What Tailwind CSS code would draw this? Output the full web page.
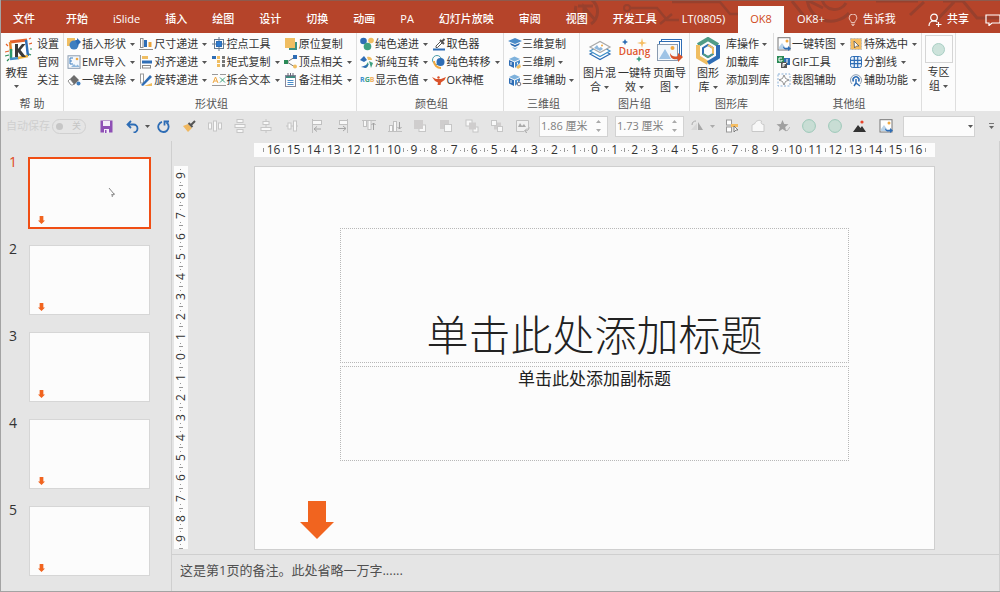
<!DOCTYPE html>
<html lang="zh-CN">
<head>
<meta charset="utf-8">
<title>OK8</title>
<script src="https://cdn.jsdelivr.net/npm/@tailwindcss/browser@4"></script>
</head>
<body class="h-screen overflow-hidden bg-[#e5e5e5] font-['Open_Sans','Noto_Sans_CJK_SC',sans-serif] text-[11px] text-[#333]">
<svg class="hidden">
  <symbol id="caret" viewBox="0 0 5 3"><path d="M0 0h5L2.500 3z" fill="#555"/></symbol>
  <symbol id="down" viewBox="0 0 34 38"><path d="M8 0h18v21h8L17 38 0 21h8z" fill="#f1641f"/></symbol>
  <symbol id="pic" viewBox="0 0 14 14"><rect x="1" y=".7" width="12" height="12.3" fill="#fff" stroke="#777"/><circle cx="10" cy="4" r="1.500" fill="#f0a840"/><path d="M2 10l3-4 3 4v2H2z" fill="#b9d3ea"/><path d="M6 9c1 2 3 2 5 1.500l0-1.500 3 2.500-3 2.500v-1.500c-3 .5-5-.5-5-3.500z" fill="#2e6db5"/></symbol>
  <symbol id="cube" viewBox="0 0 14 14"><path d="M1 4l5.500-2.500L12 4 6.500 6.500z" fill="#7fb2dc"/><path d="M1 5l5 2.300V13L1 10.500z" fill="#2e6db5"/><path d="M7 7.300L12 5v3L7 13z" fill="#4a8bc8"/><path d="M3 7v3M9.500 7.500v2" stroke="#fff"/></symbol>
</svg>
<div class="flex h-full flex-col border-b border-l border-[#a3a3a3]">
  <header class="relative flex h-[33px] shrink-0 items-end border-t border-[#8d5a4d] bg-[#b5442a] text-white">
    <svg class="absolute top-0 right-0 h-8 w-[440px]" viewBox="0 0 440 32" fill="none" stroke="#98402d" stroke-width="3"><path d="M16 5a15 15 0 0 0 9 18M32-1a15 15 0 0 1-1 24M18 5h15M24 15V6l11 13"/><circle cx="67" cy="7" r="3" stroke-width="2"/><path d="M70 7h27l10 12h12M100 23l12-10M112 1h48l10 12h20" stroke-width="2.500"/><path d="M232 0l12 15M262-2a13 13 0 0 0 24 4M247-3a24 24 0 0 0 42 15M249 0l14 7M350 14l14-13M374 22l20-21M383 0h20l14 17h24M316 0h42"/></svg>
    <nav class="relative flex h-[27px] gap-px whitespace-nowrap [&>button]:px-3 [&>button]:font-medium">
      <button class="mr-[6px]">文件</button><button>开始</button><button>iSlide</button><button>插入</button><button>绘图</button><button>设计</button><button>切换</button><button>动画</button><button>PA</button><button>幻灯片放映</button><button>审阅</button><button>视图</button><button>开发工具</button><button>LT(0805)</button><button class="bg-[#fcfcfc] text-[#d04a20]">OK8</button><button>OK8+</button>
      <button class="flex items-center gap-1"><svg class="-ml-[3px] size-3" viewBox="0 0 12 14" fill="none" stroke="#f5dcd5"><path d="M4 10c0-2-2.500-3-2.500-5.500a4.500 4.500 0 0 1 9 0C10.500 7 8 8 8 10zM4 12h4M5 13.500h2"/></svg><span class="font-normal">告诉我</span></button>
    </nav>
    <button class="relative ml-auto flex h-[27px] items-center gap-[5px] font-medium"><svg class="size-[14px]" viewBox="0 0 14 14" fill="none" stroke="#fff" stroke-width="1.200"><circle cx="6" cy="4.500" r="3.300"/><path d="M1 13c0-3 2-5 5-5 1.500 0 2.500.4 3.300 1.200M10.500 9v5M8 11.500h5.500"/></svg>共享</button>
    <button class="relative ml-4 h-[27px] w-[15px] overflow-hidden" aria-label="批注"><svg class="h-3 w-4" viewBox="0 0 16 12" fill="none" stroke="#fff" stroke-width="1.200"><path d="M1 1h14v8H7l-3 2.500V9H1z"/></svg></button>
  </header>

  <section class="flex h-[78px] shrink-0 bg-[#fcfcfc] whitespace-nowrap [&_.caret]:ml-[3px]">
    <div class="flex w-[63px] flex-col border-r border-[#dedede] pt-[2px]">
      <div class="flex h-[62px]">
        <button class="flex w-[31px] flex-col items-center"><svg class="mt-px ml-1 size-[27px]" viewBox="0 0 27 27" fill="none"><path d="M5 6l17-2" stroke="#e5622e" stroke-width="3"/><path d="M5 6l1 9" stroke="#e98a2e" stroke-width="2.500"/><path d="M6 13v10" stroke="#2b9a6a" stroke-width="2.500"/><path d="M21 4l2 16" stroke="#2e6db5" stroke-width="2.500"/><path d="M5 23l9-1" stroke="#3f8fc8" stroke-width="2.500"/><path d="M13 22l10-2" stroke="#f0b23a" stroke-width="2.500"/><path d="M8 8l12-1 1 12-13 2z" fill="#fff"/><path d="M10 8h3v5l4-5h3.500l-5 6 5.500 7h-4l-4-5v5h-3z" fill="#3a3a3a"/><path d="M0 16l4-1M24 8l3-1M1 8l2 2M24 3l2-1" stroke="#e5622e" stroke-width="1.200"/><path d="M0 20l4-1M25 13l2 0M2 25l2-2M24 18l2 1" stroke="#2b8a57" stroke-width="1.200"/></svg><span class="mt-[3px] leading-[14px]">教程</span><svg class="mt-[5px] h-[3px] w-[5px]"><use href="#caret"/></svg></button>
        <div class="ml-[5px] flex flex-col [&>button]:h-[18px]"><button>设置</button><button>官网</button><button>关注</button></div>
      </div>
      <h2 class="text-center leading-[14px] text-[#555]">帮 助</h2>
    </div>

    <div class="flex w-[293px] flex-col border-r border-[#dedede] pt-[2px] pl-[3px]">
      <div class="flex h-[62px] [&_button]:flex [&_button]:h-[18px] [&_button]:items-center [&_button]:gap-px [&>div]:w-[73px]">
        <div>
          <button><svg class="size-[14px]" viewBox="0 0 14 14"><rect x="0" y="1" width="8" height="8" fill="#f0be62"/><circle cx="7" cy="8" r="4.500" fill="#3f7fc0"/><path d="M8 3h2V1l4 4-4 4V7z" fill="#2e6db5"/></svg>插入形状<svg class="caret h-[3px] w-[5px]"><use href="#caret"/></svg></button>
          <button><svg class="size-[14px]" viewBox="0 0 14 14"><rect x="1" y=".8" width="12" height="12.500" fill="#f4f8fc" stroke="#8a9bb0"/><path d="M6 3H3v3h2M3 6v3h3" stroke="#3f7fc0" fill="none"/><circle cx="10" cy="4" r="1.300" fill="#f0a840"/><path d="M4 12l3-3 2 2 1.500-1.500L13 12z" fill="#8fb8dd"/></svg>EMF导入<svg class="caret h-[3px] w-[5px]"><use href="#caret"/></svg></button>
          <button><svg class="size-[14px]" viewBox="0 0 14 14"><path d="M1 8l6-6 5 5-5 5H4z" fill="#6d6d6d"/><path d="M1 8l2-2 4 5-1 1H4z" fill="#fff" stroke="#777" stroke-width=".7"/><circle cx="11.500" cy="10.500" r="2" fill="#3f7fc0"/></svg>一键去除<svg class="caret h-[3px] w-[5px]"><use href="#caret"/></svg></button>
        </div>
        <div>
          <button><svg class="size-[14px]" viewBox="0 0 14 14"><rect x="1.500" y="1.500" width="2.500" height="9" fill="#fff" stroke="#888"/><rect x="5" y="3" width="3" height="7" fill="#2e6db5"/><rect x="9.500" y="5" width="3" height="5" fill="#e9a33a"/><path d="M0 12.500h14" stroke="#888"/></svg>尺寸递进<svg class="caret h-[3px] w-[5px]"><use href="#caret"/></svg></button>
          <button><svg class="size-[14px]" viewBox="0 0 14 14"><path d="M1.500 0v14" stroke="#999"/><rect x="3" y="1" width="6" height="3" fill="#f0be62"/><rect x="3" y="5.500" width="10" height="3" fill="#2e6db5"/><rect x="3.500" y="10.500" width="8" height="2.500" fill="#fff" stroke="#888"/></svg>对齐递进<svg class="caret h-[3px] w-[5px]"><use href="#caret"/></svg></button>
          <button><svg class="size-[14px]" viewBox="0 0 14 14"><rect x="1.500" y="1" width="3" height="9" fill="#fff" stroke="#999"/><path d="M2 12L11 2l2 2-9 9z" fill="#2e6db5"/><path d="M5 13l8-3v3z" fill="#f0be62"/></svg>旋转递进<svg class="caret h-[3px] w-[5px]"><use href="#caret"/></svg></button>
        </div>
        <div>
          <button><svg class="size-[14px]" viewBox="0 0 14 14" fill="none" stroke="#667a90"><rect x="2.500" y="2.500" width="9" height="9"/><path d="M7 0v14M0 7h14"/><rect x="4.500" y="4.500" width="5" height="5" fill="#2e7bd0" stroke="#2e6db5"/></svg>控点工具</button>
          <button><svg class="size-[14px]" viewBox="0 0 14 14"><path d="M0 1h4v3H0z" fill="#2e6db5"/><path d="M6.500 1v12" stroke="#f0be62" stroke-width="3" stroke-dasharray="3 1"/><path d="M11.500 1v12" stroke="#777" stroke-width="3" stroke-dasharray="3 1"/></svg>矩式复制<svg class="caret h-[3px] w-[5px]"><use href="#caret"/></svg></button>
          <button><svg class="size-[14px]" viewBox="0 0 14 14" fill="none"><path d="M0 1.500h6M8 1.500h6M0 12.500h14" stroke="#999"/><path d="M1 10l2.500-6L6 10M2 8h3" stroke="#f0a840"/><path d="M8 4.500l5 5M13 4.500l-5 5" stroke="#3ba07c"/></svg>拆合文本<svg class="caret h-[3px] w-[5px]"><use href="#caret"/></svg></button>
        </div>
        <div>
          <button><svg class="size-[14px]" viewBox="0 0 14 14"><rect x="5" y="5" width="8" height="8" fill="#3a8f80"/><rect x="1" y="1" width="10" height="10" fill="#f0be62"/></svg>原位复制</button>
          <button><svg class="size-[14px]" viewBox="0 0 14 14"><path d="M11 2L3 7l8 5" fill="none" stroke="#777"/><path d="M0 5h4v4H0z" fill="#2b8a57"/><path d="M9 0h4v4H9z" fill="#2e6db5"/><circle cx="11" cy="11.500" r="2" fill="#f0be62"/></svg>顶点相关<svg class="caret h-[3px] w-[5px]"><use href="#caret"/></svg></button>
          <button><svg class="size-[14px]" viewBox="0 0 14 14"><rect x="1.500" y="2.500" width="10" height="11" fill="#fff" stroke="#889"/><path d="M2 4h9" stroke="#3a8f80" stroke-width="2"/><path d="M4 0v4M6.500 0v4M9 0v4" stroke="#667"/><path d="M3.500 7.500h6M3.500 9.500h6M3.500 11.500h6" stroke="#4a8bc8"/></svg>备注相关<svg class="caret h-[3px] w-[5px]"><use href="#caret"/></svg></button>
        </div>
      </div>
      <h2 class="text-center leading-[14px] text-[#555]">形状组</h2>
    </div>

    <div class="flex w-[147px] flex-col border-r border-[#dedede] pt-[2px] pl-[3px]">
      <div class="flex h-[62px] [&_button]:flex [&_button]:h-[18px] [&_button]:items-center [&_button]:gap-px [&>div]:w-[72px]">
        <div>
          <button><svg class="size-[14px]" viewBox="0 0 14 14"><circle cx="3.500" cy="4" r="3.300" fill="#2e6db5"/><circle cx="11" cy="3.500" r="2.800" fill="#f0be62"/><circle cx="7.500" cy="9.500" r="3.800" fill="#3fa080"/></svg>纯色递进<svg class="caret h-[3px] w-[5px]"><use href="#caret"/></svg></button>
          <button><svg class="size-[14px]" viewBox="0 0 14 14"><path d="M0 5l4-4 3 4-3 2z" fill="#2e6db5"/><path d="M7 2c3-1 5 1 5 3l-4 0z" fill="#f0be62"/><path d="M4 13c4 0 5-3 4-6M9 6l4 2-2 5z" fill="#3fa080"/><path d="M1 12l5 1 3-4z" fill="#2e6db5"/></svg>渐纯互转<svg class="caret h-[3px] w-[5px]"><use href="#caret"/></svg></button>
          <button><span class="w-[14px] text-[7px] font-bold text-[#3b8dd0]">R<span class="text-[#3fa080]">G</span><span class="text-[#f0b263]">B</span></span>显示色值<svg class="caret h-[3px] w-[5px]"><use href="#caret"/></svg></button>
        </div>
        <div>
          <button><svg class="size-[14px]" viewBox="0 0 14 14"><path d="M4 9l5-5 1.500 1.500-5 5H4z" fill="#fff" stroke="#555"/><path d="M8 3l4 4M10 4.500L12.500 2" stroke="#555" stroke-width="2"/><path d="M1 12.500h12" stroke="#2e6db5" stroke-width="2"/></svg>取色器</button>
          <button><svg class="size-[14px]" viewBox="0 0 14 14"><circle cx="5" cy="5" r="4.500" fill="none" stroke="#4a9aa8"/><path d="M2 6c0 4 3 7 7 7" fill="none" stroke="#f0a840" stroke-width="2"/><circle cx="8.500" cy="7" r="4" fill="#2e6db5"/></svg>纯色转移<svg class="caret h-[3px] w-[5px]"><use href="#caret"/></svg></button>
          <button><svg class="size-[14px]" viewBox="0 0 14 14"><path d="M0 4l4 2h5l5-2-1.500 3L9 9.500 8.500 12h-3L6 9.500 3 8z" fill="#d9532b"/><circle cx="6.500" cy="4.500" r="1.200" fill="#d9532b"/></svg>OK神框</button>
        </div>
      </div>
      <h2 class="text-center leading-[14px] text-[#555]">颜色组</h2>
    </div>

    <div class="flex w-[76px] flex-col border-r border-[#dedede] pt-[2px] pl-1">
      <div class="h-[62px] [&_button]:flex [&_button]:h-[18px] [&_button]:items-center">
        <button><svg class="size-[14px]" viewBox="0 0 14 14"><path d="M0 4l7-3 7 3-7 3z" fill="#4a8bc8"/><path d="M2 6l5 2 5-2-1 2-4 2-4-2z" fill="#2e6db5"/><path d="M4 10l3 3 3-3-3 1z" fill="#7fb2dc"/></svg>三维复制</button>
        <button><svg class="size-[14px]" viewBox="0 0 14 14"><use href="#cube"/><path d="M8 12l4-3 1 3-3 2z" fill="#f0be62"/></svg>三维刷<svg class="caret h-[3px] w-[5px]"><use href="#caret"/></svg></button>
        <button><svg class="size-[14px]" viewBox="0 0 14 14"><use href="#cube"/><circle cx="11" cy="11" r="1.800" fill="#fff" stroke="#778"/></svg>三维辅助<svg class="caret h-[3px] w-[5px]"><use href="#caret"/></svg></button>
      </div>
      <h2 class="text-center leading-[14px] text-[#555]">三维组</h2>
    </div>

    <div class="flex w-[110px] flex-col border-r border-[#dedede] pt-[2px]">
      <div class="flex h-[62px] justify-center gap-[2px] leading-[14px] [&_button]:flex [&_button]:w-[33px] [&_button]:flex-col [&_button]:items-center">
        <button><svg class="mt-[2px] mb-px h-7 w-6" viewBox="0 0 24 28"><g fill="#fff" stroke-width="1.200"><path d="M2 17l10 5.500L22 17l-10-5.500z" stroke="#2e6db5"/><path d="M2 14l10 5.500L22 14 12 8.500z" stroke="#3f8fc8"/><path d="M2 10l10 5.500L22 10 12 4.500z" stroke="#aaa"/></g><path d="M6 11l3-3 2 3 2-1 2 2-3 2z" fill="#8fb8dd"/><circle cx="14" cy="8.500" r="1" fill="#f0a840"/></svg><span>图片混</span><span class="flex items-center">合<svg class="caret h-[3px] w-[5px]"><use href="#caret"/></svg></span></button>
        <button><span class="relative mt-[2px] mb-px flex h-7 w-[30px] items-center justify-center text-[10px] font-semibold text-[#e0562c]"><svg class="absolute inset-0 size-full" viewBox="0 0 30 28"><path d="M22 1l1 4 4 1-4 1-1 4-1-4-4-1 4-1z" fill="#f5bd62"/><path d="M5 2l1 2 2 1-2 1-1 2-1-2-2-1 2-1z" fill="#2e6db5"/><path d="M19 19l1 2 2 1-2 1-1 2-1-2-2-1 2-1z" fill="#3fa080"/></svg><span class="relative">Duang</span></span><span>一键特</span><span class="flex items-center">效<svg class="caret h-[3px] w-[5px]"><use href="#caret"/></svg></span></button>
        <button><svg class="mt-[2px] mb-px h-7 w-[27px]" viewBox="0 0 27 28"><rect x="5.500" y="2.500" width="20" height="18" fill="#fff" stroke="#2e6db5"/><rect x="3.500" y="4.500" width="20" height="18" fill="#fff" stroke="#2e6db5"/><rect x="1.500" y="7.500" width="20" height="16" fill="#f4f8fc" stroke="#8a9bb0"/><path d="M3 22l6-10 6 10z" fill="#9dc3e6"/><circle cx="16.500" cy="11" r="2" fill="#f0a840"/><path d="M14 16c2 4 5 4 8 3v-3l5 4-5 5v-3c-4 1-8 0-8-6z" fill="#d9532b"/></svg><span>页面导</span><span class="flex items-center">图<svg class="caret h-[3px] w-[5px]"><use href="#caret"/></svg></span></button>
      </div>
      <h2 class="text-center leading-[14px] text-[#555]">图片组</h2>
    </div>

    <div class="flex w-[84px] flex-col border-r border-[#dedede] pt-[2px]">
      <div class="flex h-[62px]">
        <button class="ml-1 flex w-7 flex-col items-center leading-[14px]"><svg class="mt-[2px] mb-px h-7 w-[26px]" viewBox="0 0 26 28" fill="none" stroke-width="4"><path d="M3 8l10-6 10 6" stroke="#4f9c86"/><path d="M3 8v12l10 6" stroke="#f0be62"/><path d="M23 8v12l-10 6" stroke="#2e6db5"/><path d="M8 11l5-3 5 3v6l-5 3-5-3z" stroke="#2e6db5" stroke-width="2"/><path d="M13 8l5 3v6" stroke="#f0be62" stroke-width="2"/><path d="M18 17l-5 3-5-3" stroke="#4f9c86" stroke-width="2"/></svg><span>图形</span><span class="flex items-center">库<svg class="caret h-[3px] w-[5px]"><use href="#caret"/></svg></span></button>
        <div class="ml-1 [&>button]:flex [&>button]:h-[18px] [&>button]:items-center"><button>库操作<svg class="caret h-[3px] w-[5px]"><use href="#caret"/></svg></button><button>加载库</button><button>添加到库</button></div>
      </div>
      <h2 class="text-center leading-[14px] text-[#555]">图形库</h2>
    </div>

    <div class="flex w-[148px] flex-col border-r border-[#dedede] pt-[2px] pl-[3px]">
      <div class="flex h-[62px] [&_button]:flex [&_button]:h-[18px] [&_button]:items-center [&_button]:gap-px [&>div]:w-[73px]">
        <div>
          <button><svg class="size-[14px]"><use href="#pic"/></svg>一键转图<svg class="caret h-[3px] w-[5px]"><use href="#caret"/></svg></button>
          <button><svg class="size-[14px]" viewBox="0 0 14 14"><rect x="0" y="1" width="7" height="7" fill="#2b8a57"/><rect x="7" y="3" width="6" height="7" fill="#2e6db5"/><rect x="4" y="7" width="6" height="6" fill="#555"/><path d="M5 3H2v3h3V5M10 4v4M6 12V8.500h3M6 10h2" fill="none" stroke="#fff"/></svg>GIF工具</button>
          <button><svg class="size-[14px]" viewBox="0 0 14 14"><rect x="1" y="1" width="12" height="12" fill="none" stroke="#8ab0d8" stroke-dasharray="2 1.500"/><path d="M7 2l1.500 3.500L12 7 8.500 8.500 7 12 5.500 8.500 2 7l3.500-1.500z" fill="#fff" stroke="#777" stroke-width=".8"/></svg>裁图辅助</button>
        </div>
        <div>
          <button><svg class="size-[14px]" viewBox="0 0 14 14"><rect x="1.500" y="1.500" width="11" height="11" fill="#f5bd62" stroke="#bbb" stroke-dasharray="2 1"/><path d="M5 4l5 5H7.500L5.500 11z" fill="#fff" stroke="#555" stroke-width=".8"/></svg>特殊选中<svg class="caret h-[3px] w-[5px]"><use href="#caret"/></svg></button>
          <button><svg class="size-[14px]" viewBox="0 0 14 14" fill="none"><rect x="1.500" y="1.500" width="11" height="11" rx="2" fill="#e8f1fa" stroke="#2e6db5"/><path d="M1 5.300h12M1 8.700h12M5.300 1v12M8.700 1v12" stroke="#2e6db5" stroke-width="1.200"/></svg>分割线<svg class="caret h-[3px] w-[5px]"><use href="#caret"/></svg></button>
          <button><svg class="size-[14px]" viewBox="0 0 14 14" fill="none"><path d="M3 11a5.500 5.500 0 1 1 8 0" stroke="#8a9bb0"/><path d="M4.500 8.500a3 3 0 1 1 5 0" stroke="#2e6db5" stroke-width="1.500"/><path d="M7 6v4l-2 3M7 10l4 3" stroke="#2e6db5" stroke-width="1.500"/></svg>辅助功能<svg class="caret h-[3px] w-[5px]"><use href="#caret"/></svg></button>
        </div>
      </div>
      <h2 class="text-center leading-[14px] text-[#555]">其他组</h2>
    </div>

    <div class="w-[34px] border-r border-[#dedede] pt-[2px]">
      <button class="flex w-full flex-col items-center leading-[14px]"><span class="mb-[2px] flex size-7 items-center justify-center border border-[#d5d5d5]"><span class="size-[13px] rounded-full border border-[#a9cfc4] bg-[#cde3db]"></span></span><span>专区</span><span class="flex items-center">组<svg class="caret h-[3px] w-[5px]"><use href="#caret"/></svg></span></button>
    </div>
  </section>

  <section class="flex h-[30px] shrink-0 items-center pl-[5px] [&_svg]:shrink-0">
    <label for="auto" class="text-[#cfcfcf]">自动保存</label>
    <span class="relative ml-[2px] flex h-[15px] w-[34px] items-center"><input id="auto" type="checkbox" role="switch" class="absolute inset-0 size-full appearance-none rounded-full border border-[#d0d0d0]"><span class="pointer-events-none ml-1 size-[7px] rounded-full bg-[#c6c6c6]"></span><span class="pointer-events-none ml-[9px] text-[9px] text-[#c6c6c6]">关</span></span>
    <button class="ml-[14px]" aria-label="保存"><svg class="size-[13px]" viewBox="0 0 13 13"><path d="M.5.500h12v12H.5z" fill="#8e4fb5"/><path d="M3 1h7v5H3zM4 9h5v4H4z" fill="#f3ecf8"/><path d="M5 10h1.500v3H5z" fill="#8e4fb5"/></svg></button>
    <button class="ml-[13px] flex items-center gap-[6px]" aria-label="撤消"><svg class="h-[13px] w-[13px]" viewBox="0 0 13 13" fill="none" stroke="#2e6db5" stroke-width="1.800"><path d="M5 1L1.500 4.500 5 8M2 4.500h5.500a4 4 0 0 1 0 8"/></svg><svg class="h-[3px] w-[5px]"><use href="#caret"/></svg></button>
    <button class="ml-[7px]" aria-label="恢复"><svg class="size-[13px]" viewBox="0 0 13 13" fill="none" stroke="#2e6db5" stroke-width="1.800"><path d="M5 1.800a5.200 5.200 0 1 0 4.500.8M7.500 5.500V1.500h4.500"/></svg></button>
    <div class="ml-3 flex w-[348px] justify-between [&_svg]:size-[14px]">
      <button aria-label="格式刷"><svg viewBox="0 0 14 14"><path d="M1 7l5-2 4 4-4 4z" fill="#f0b860"/><path d="M6.500 4l4 4M9 6l4-4" stroke="#555" stroke-width="2"/></svg></button>
      <button aria-label="横向分布"><svg viewBox="0 0 14 14" fill="#f8f8f8" stroke="#c6c6c6"><rect x=".5" y="4" width="3" height="6"/><rect x="5.500" y="2" width="3" height="10"/><rect x="10.500" y="4" width="3" height="6"/></svg></button>
      <button aria-label="纵向分布"><svg viewBox="0 0 14 14" fill="#f8f8f8" stroke="#c6c6c6"><rect x="4" y=".5" width="6" height="3"/><rect x="2" y="5.500" width="10" height="3"/><rect x="4" y="10.500" width="6" height="3"/></svg></button>
      <button aria-label="水平居中"><svg viewBox="0 0 14 14" fill="#f8f8f8" stroke="#c6c6c6"><path d="M7 0v14"/><rect x="4" y="2.500" width="6" height="3"/><rect x="2" y="8.500" width="10" height="3"/></svg></button>
      <button aria-label="垂直居中"><svg viewBox="0 0 14 14" fill="#f8f8f8" stroke="#c6c6c6"><path d="M1 7h12"/><rect x="3" y="4" width="3" height="6"/><rect x="8.500" y="2" width="3" height="10"/></svg></button>
      <button aria-label="左对齐"><svg viewBox="0 0 14 14" fill="#f8f8f8" stroke="#c0c0c0"><path d="M2.500 0v14"/><rect x="2.500" y="1.500" width="9" height="4"/><path d="M4 10h7M7 7.500L4 10l3 2.500" stroke="#a5a5a5" fill="none"/></svg></button>
      <button aria-label="右对齐"><svg viewBox="0 0 14 14" fill="#f8f8f8" stroke="#c0c0c0"><path d="M11.500 0v14"/><rect x="3.500" y="1.500" width="8" height="4"/><path d="M2 9.500h8M7 7l3 2.500L7 12" stroke="#a5a5a5" fill="none"/></svg></button>
      <button aria-label="顶端对齐"><svg viewBox="0 0 14 14" fill="#f8f8f8" stroke="#c0c0c0"><path d="M0 1.500h14"/><rect x="1.500" y="1.500" width="3" height="6"/><rect x="6" y="1.500" width="3" height="9"/><path d="M11.500 11V4M9.500 6l2-2 2 2" stroke="#a0a0a0" fill="none"/></svg></button>
      <button aria-label="底端对齐"><svg viewBox="0 0 14 14" fill="#f8f8f8" stroke="#c0c0c0"><path d="M0 12.500h14"/><rect x="1.500" y="6.500" width="3" height="6"/><rect x="5.500" y="2.500" width="3" height="10"/><path d="M11.500 3v7M9.500 8l2 2 2-2" stroke="#a0a0a0" fill="none"/></svg></button>
      <button aria-label="置于顶层"><svg viewBox="0 0 14 14"><rect x="6" y="6" width="6.500" height="6.500" fill="#f8f8f8" stroke="#c6c6c6"/><rect x="1" y="1" width="9" height="9" fill="#cfcdcd"/></svg></button>
      <button aria-label="置于底层"><svg viewBox="0 0 14 14"><rect x="1" y="1" width="9" height="9" fill="#cfcdcd"/><rect x="5.500" y="5.500" width="7" height="7" fill="#f8f8f8" stroke="#c6c6c6"/></svg></button>
      <button aria-label="上移一层"><svg viewBox="0 0 14 14" fill="#f8f8f8" stroke="#c6c6c6"><rect x="1" y="1" width="6" height="6"/><rect x="8" y="8" width="5" height="5"/><rect x="4" y="3.500" width="7" height="7" fill="#cfcdcd" stroke="none"/></svg></button>
      <button aria-label="下移一层"><svg viewBox="0 0 14 14" fill="#f8f8f8" stroke="#c6c6c6"><rect x="4" y="3.500" width="7" height="7" fill="#cfcdcd" stroke="none"/><rect x="1.500" y="1.500" width="5" height="5"/><rect x="7.500" y="7.500" width="5" height="5"/></svg></button>
      <button aria-label="更改图片"><svg viewBox="0 0 14 14" fill="none" stroke="#c0c0c0"><path d="M8 12.500H.5v-11h12V8" fill="#f0f0f0"/><path d="M2 8l2-4 2 3 2-2 2 3z" fill="#aaa" stroke="none"/><path d="M13 8c0 3-2 4-4 4M11 9.500L8.500 12l2.500 2" stroke="#aaa"/></svg></button>
    </div>
    <div class="ml-[9px] flex h-[21px] w-[69px] items-center border border-[#d2d2d2] bg-[#fcfcfc]"><input aria-label="高度" value="1.86 厘米" class="w-[56px] pl-px text-[11px] text-[#808080]"><button aria-label="调整高度"><svg class="h-3 w-[5px]" viewBox="0 0 5 12" fill="#aaa"><path d="M0 3l2.500-3L5 3zM0 9l2.500 3L5 9z"/></svg></button></div>
    <div class="ml-[7px] flex h-[21px] w-[69px] items-center border border-[#d2d2d2] bg-[#fcfcfc]"><input aria-label="宽度" value="1.73 厘米" class="w-[56px] pl-px text-[11px] text-[#808080]"><button aria-label="调整宽度"><svg class="h-3 w-[5px]" viewBox="0 0 5 12" fill="#aaa"><path d="M0 3l2.500-3L5 3zM0 9l2.500 3L5 9z"/></svg></button></div>
    <button class="ml-[6px] flex items-center gap-[6px]" aria-label="旋转"><svg class="size-[14px]" viewBox="0 0 14 14"><path d="M1 11l6-7v7z" fill="#d8d8d8"/><path d="M8 3l5 8H8z" fill="#a8a8a8"/><path d="M2 6c0-3 2-4 4-4" fill="none" stroke="#aaa"/></svg><svg class="h-[3px] w-[5px] opacity-40"><use href="#caret"/></svg></button>
    <div class="ml-[10px] flex w-[168px] justify-between [&_svg]:size-[14px]">
      <button aria-label="选择窗格"><svg viewBox="0 0 14 14"><g fill="#fff" stroke="#999"><rect x="1.500" y="1" width="5" height="5"/><rect x="1.500" y="8" width="5" height="5"/></g><path d="M6 5h7v3H6z" fill="#f5bd62"/><path d="M9 7l4 4h-2l-2 2z" fill="#fff" stroke="#666" stroke-width=".8"/></svg></button>
      <button aria-label="编辑形状"><svg viewBox="0 0 14 14"><path d="M1 12.500V6l3-1.500c.5-2.500 4-4 6.500-2.500-1 2 0 3.500 2.500 3.500v7z" fill="#f8f8f8" stroke="#c8c8c8"/></svg></button>
      <button aria-label="动画"><svg viewBox="0 0 14 14"><path d="M6.500 1l1.700 4 4.300.3-3.300 2.800 1 4.400-3.700-2.400L2.800 12.500l1-4.400L.5 5.300 4.800 5z" fill="#a0a0a0"/><path d="M9 10l2 2 3-4" stroke="#b5b5b5" fill="none"/></svg></button>
      <button aria-label="圆形"><svg viewBox="0 0 14 14"><circle cx="7" cy="7" r="6.400" fill="#c8ddd4" stroke="#9cc8b8"/></svg></button>
      <button aria-label="圆形二"><svg viewBox="0 0 14 14"><circle cx="7" cy="7" r="6.400" fill="#c8ddd4" stroke="#9cc8b8"/></svg></button>
      <button aria-label="图片"><svg viewBox="0 0 14 14"><path d="M0 13l5-7 2.500 3L9 7l4 6z" fill="#333"/><circle cx="9" cy="3" r="1.600" fill="#e8432a"/></svg></button>
      <button aria-label="一键转图"><svg><use href="#pic"/></svg></button>
    </div>
    <div class="relative ml-auto h-[21px] w-[72px]"><select aria-label="样式" class="size-full appearance-none border border-[#d2d2d2] bg-[#fcfcfc]"><option></option></select><svg class="pointer-events-none absolute top-[9px] right-[2px] h-[3px] w-[5px]"><use href="#caret"/></svg></div>
    <button class="mr-[6px] ml-[14px]" aria-label="自定义快速访问工具栏"><svg class="h-[6px] w-[5px]" viewBox="0 0 5 6"><path d="M0 .5h5" stroke="#777"/><path d="M0 3h5L2.500 6z" fill="#666"/></svg></button>
  </section>

  <div class="flex min-h-0 flex-1">
    <aside class="w-[171px] shrink-0 overflow-hidden border-r border-[#cfcfcf] pt-[17px] text-[14px]">
      <ol class="flex flex-col gap-[17px] [&>li]:flex [&>li]:h-[70px] [&>li]:gap-3 [&>li]:pl-2 [&>li>span]:w-2 [&>li>span]:leading-[8px]">
        <li class="text-[#e0481c]"><span>1</span><button aria-label="幻灯片 1" class="relative -mx-px -my-px flex h-[72px] w-[123px] items-end border-2 border-[#f04e14] bg-[#fcfcfc] pb-[3px] pl-2"><svg class="h-2 w-[7px]"><use href="#down"/></svg><svg class="absolute top-[28px] left-[78px] h-3 w-2" viewBox="0 0 8 12" stroke="#888" fill="none"><path d="M1 1l5 6M3 8l4-1M4 10l1-2"/></svg></button></li>
        <li><span>2</span><button aria-label="幻灯片 2" class="flex w-[121px] items-end border border-[#d6d6d6] bg-[#fcfcfc] pb-[3px] pl-2"><svg class="h-2 w-[7px]"><use href="#down"/></svg></button></li>
        <li><span>3</span><button aria-label="幻灯片 3" class="flex w-[121px] items-end border border-[#d6d6d6] bg-[#fcfcfc] pb-[3px] pl-2"><svg class="h-2 w-[7px]"><use href="#down"/></svg></button></li>
        <li><span>4</span><button aria-label="幻灯片 4" class="flex w-[121px] items-end border border-[#d6d6d6] bg-[#fcfcfc] pb-[3px] pl-2"><svg class="h-2 w-[7px]"><use href="#down"/></svg></button></li>
        <li><span>5</span><button aria-label="幻灯片 5" class="flex w-[121px] items-end border border-[#d6d6d6] bg-[#fcfcfc] pb-[3px] pl-2"><svg class="h-2 w-[7px]"><use href="#down"/></svg></button></li>
      </ol>
    </aside>
    <main class="flex min-w-0 flex-1 flex-col border-r border-[#cfcfcf]">
      <div class="flex min-h-0 flex-1 flex-col border-b border-[#cfcfcf] pt-[2px] pr-[64px] pl-[2px]">
        <div id="hruler" class="mb-[9px] ml-[80px] flex h-[14px] items-center bg-[#fcfcfc] px-[9px] text-[12px] leading-[14px]"></div>
        <div class="flex">
          <div id="vruler" class="flex h-[383px] w-[14px] rotate-180 flex-col bg-[#fcfcfc] text-[12px] leading-[14px]"></div>
          <section class="ml-[66px] flex h-[384px] flex-1 flex-col border border-[#cfcfcf] bg-[#fcfcfc] pt-[61px]">
            <h1 contenteditable="true" class="mx-auto flex h-[135px] w-3/4 items-end justify-center border border-dotted border-[#b8b8b8] text-[42px] leading-[54px] font-light text-[#222]">单击此处添加标题</h1>
            <p contenteditable="true" class="mx-auto mt-[3px] h-[95px] w-3/4 border border-dotted border-[#b8b8b8] text-center text-[17px] leading-6 text-[#222]">单击此处添加副标题</p>
            <svg class="mt-[40px] ml-[45px] h-[38px] w-[34px]"><use href="#down"/></svg>
          </section>
        </div>
      </div>
      <p class="flex h-9 shrink-0 items-center pb-[5px] pl-2 text-[13px] text-[#505050]">这是第1页的备注。此处省略一万字......</p>
    </main>
  </div>
</div>
<script>
  // Rulers: one cell per centimetre, a tick between cells, dots at the quarters beside one-digit numbers.
  const hr = document.getElementById('hruler');
  const tick = '<i class="h-1 w-px bg-[#999]"></i>';
  const dot = '<i class="size-px bg-[#999]"></i>';
  for (let n = -16; n <= 16; n++) {
    const d = Math.abs(n) < 10 ? dot : '';
    hr.insertAdjacentHTML('beforeend', '<div class="flex min-w-0 flex-1 items-center justify-between">' + tick + d + '<span>' + Math.abs(n) + '</span>' + d + '<i></i></div>');
  }
  hr.insertAdjacentHTML('beforeend', tick);
  const vr = document.getElementById('vruler');
  for (let n = -9; n <= 9; n++) {
    vr.insertAdjacentHTML('beforeend', '<div class="flex min-h-0 flex-1 flex-col items-center justify-between"><i class="h-px w-1 bg-[#999]"></i><i class="size-px bg-[#999]"></i><span class="[writing-mode:vertical-rl]">' + Math.abs(n) + '</span><i class="size-px bg-[#999]"></i><i></i></div>');
  }
</script>
</body>
</html>
